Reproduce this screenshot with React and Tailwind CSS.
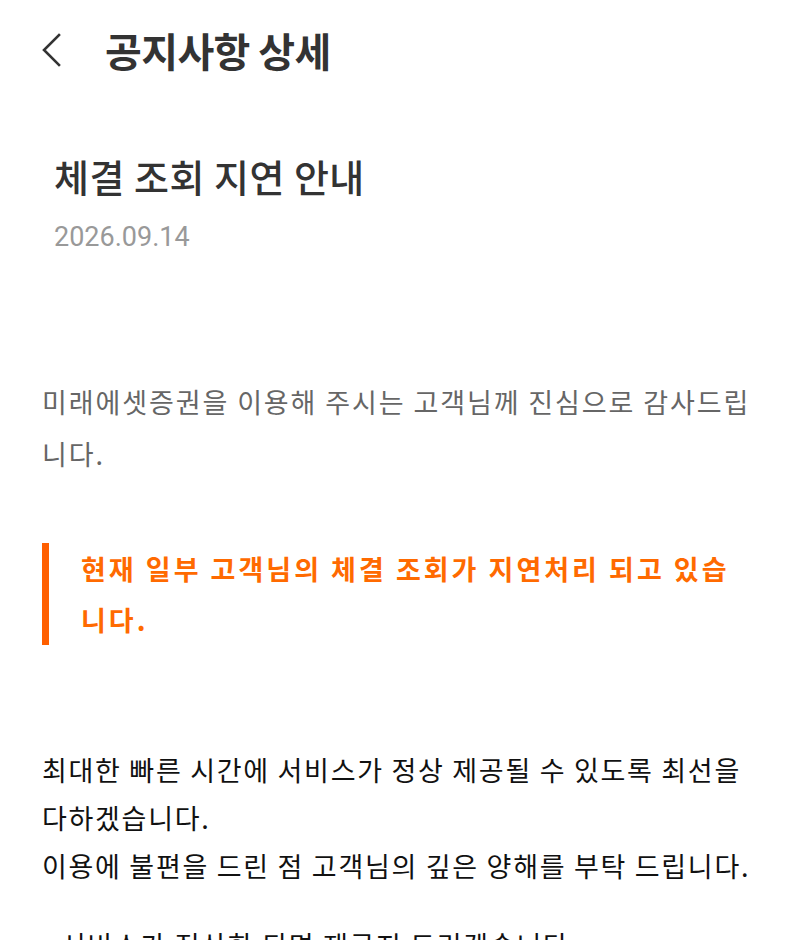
const BODY_FONT = { fontFamily: '"Noto Sans CJK KR", "Noto Sans", sans-serif' };

function BackIcon() {
  return (
    <svg width="24" height="36" viewBox="0 0 24 36" fill="none" aria-hidden>
      <polyline
        points="18,3 3,18 18,33"
        stroke="#333333"
        strokeWidth="2.6"
        strokeLinecap="square"
        strokeLinejoin="miter"
      />
    </svg>
  );
}

export default function App() {
  return (
    <div className="min-h-screen bg-white overflow-hidden" style={BODY_FONT}>
      {/* 상단 헤더 */}
      <header className="h-[100px] flex items-center">
        <button className="ml-[41px] w-[24px] h-[36px] flex items-center">
          <BackIcon />
        </button>
        <h1 className="ml-[40px] text-[40px] font-bold text-[#333333] leading-none tracking-[-0.6px]">
          공지사항 상세
        </h1>
      </header>

      <main className="px-[42px]">
        <div className="pl-[12px]">
          <h2 className="mt-[52px] text-[38px] leading-[48px] font-medium text-[#333333] tracking-[0.5px] whitespace-nowrap">
            체결 조회 지연 안내
          </h2>
          <p
            className="mt-[21px] text-[27px] leading-[32px] text-[#999999]"
            style={{ fontFamily: 'Roboto, "Noto Sans CJK KR", sans-serif' }}
          >
            2026.09.14
          </p>
        </div>

        <p className="mt-[123px] text-[27px] leading-[52px] text-[#666666] tracking-[1.9px] whitespace-nowrap">
          미래에셋증권을 이용해 주시는 고객님께 진심으로 감사드립
          <br />
          니다.
        </p>

        <div className="mt-[63px] border-l-[7px] border-[#ff5f00] pl-[32px]">
          <p className="text-[27px] leading-[51px] font-bold text-[#ff6a00] tracking-[3px] whitespace-nowrap">
            현재 일부 고객님의 체결 조회가 지연처리 되고 있습
            <br />
            니다.
          </p>
        </div>

        <p className="mt-[101px] text-[27px] leading-[48px] text-[#111111] tracking-[1.7px] whitespace-nowrap">
          최대한 빠른 시간에 서비스가 정상 제공될 수 있도록 최선을
          <br />
          다하겠습니다.
          <br />
          이용에 불편을 드린 점 고객님의 깊은 양해를 부탁 드립니다.
        </p>

        <p className="mt-[31px] text-[27px] leading-[48px] text-[#111111] tracking-[1.7px] whitespace-nowrap">
          - 서비스가 정상화 되면 재공지 드리겠습니다.
        </p>
      </main>
    </div>
  );
}
